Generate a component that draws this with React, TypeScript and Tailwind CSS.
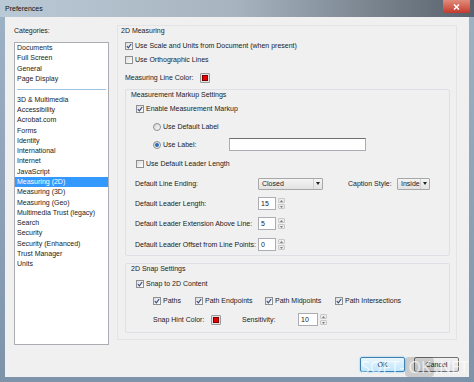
import React from "react";

const font = "font-['Liberation_Sans',Arial,sans-serif]";

const Check = ({ on = true }: { on?: boolean }) => (
  <span className="inline-flex h-[8px] w-[8px] shrink-0 items-center justify-center border border-[#8e8f8f] bg-gradient-to-br from-[#dcdcdc] to-[#ffffff]">
    {on && (
      <svg width="6" height="6" viewBox="0 0 6 6">
        <path d="M0.8 3.2 L2.4 4.8 L5.2 1" fill="none" stroke="#3a4c85" strokeWidth="1.2" />
      </svg>
    )}
  </span>
);

const Radio = ({ on = false }: { on?: boolean }) => (
  <span className="inline-flex h-[8px] w-[8px] shrink-0 items-center justify-center rounded-full border border-[#8e8f8f] bg-gradient-to-br from-[#d6d6d6] to-[#fafafa]">
    {on && <span className="h-[4px] w-[4px] rounded-full bg-[#2b6bc0]" />}
  </span>
);

const CheckRow = ({ label, on = true, className = "" }: { label: string; on?: boolean; className?: string }) => (
  <div className={`flex h-[10px] items-center gap-[2px] ${className}`}>
    <Check on={on} />
    <span>{label}</span>
  </div>
);

const Swatch = () => (
  <span className="inline-flex h-[10px] w-[10px] items-center justify-center rounded-[1px] border border-[#9a9a9a] bg-[#e4e4e4]">
    <span className="h-[6px] w-[6px] border border-[#7a0000] bg-[#e80000]" />
  </span>
);

const Spin = ({ value, w = 18 }: { value: string; w?: number }) => (
  <div className="flex h-[13px] items-stretch gap-[2px]">
    <div className="flex items-center border border-[#abadb3] bg-white pl-[2px]" style={{ width: w }}>
      {value}
    </div>
    <div className="flex w-[7px] flex-col justify-center gap-[1px]">
      <div className="flex h-[5px] items-center justify-center rounded-[1px] border border-[#c8c8c8] bg-[#ececec]">
        <svg width="3" height="2" viewBox="0 0 3 2"><path d="M0 2 L1.5 0 L3 2Z" fill="#7a7a7a" /></svg>
      </div>
      <div className="flex h-[5px] items-center justify-center rounded-[1px] border border-[#c8c8c8] bg-[#ececec]">
        <svg width="3" height="2" viewBox="0 0 3 2"><path d="M0 0 L1.5 2 L3 0Z" fill="#7a7a7a" /></svg>
      </div>
    </div>
  </div>
);

const Dropdown = ({ value, w }: { value: string; w: number }) => (
  <div className="flex h-[12px] items-stretch rounded-[1px] border border-[#a8a8a8] bg-gradient-to-b from-[#f4f4f4] to-[#e2e2e2]" style={{ width: w }}>
    <div className="flex flex-1 items-center pl-[3px]">{value}</div>
    <div className="flex w-[9px] items-center justify-center border-l border-[#d0d0d0]">
      <svg width="4" height="3" viewBox="0 0 4 3"><path d="M0 0 L4 0 L2 3Z" fill="#222" /></svg>
    </div>
  </div>
);

const categories: (string | null)[] = [
  "Documents",
  "Full Screen",
  "General",
  "Page Display",
  null,
  "3D & Multimedia",
  "Accessibility",
  "Acrobat.com",
  "Forms",
  "Identity",
  "International",
  "Internet",
  "JavaScript",
  "Measuring (2D)",
  "Measuring (3D)",
  "Measuring (Geo)",
  "Multimedia Trust (legacy)",
  "Search",
  "Security",
  "Security (Enhanced)",
  "Trust Manager",
  "Units",
];

const LabelRow = ({ label, children }: { label: string; children: React.ReactNode }) => (
  <div className="flex h-[13px] items-center pl-[9px]">
    <span className="w-[123px] shrink-0">{label}</span>
    {children}
  </div>
);

export default function App() {
  return (
    <div className={`relative h-[382px] w-[474px] overflow-hidden bg-gradient-to-b from-[#9fb3c6] to-[#7d93aa] text-[7px] leading-[10px] text-[#1b1b1b] ${font}`}>
      {/* title bar */}
      <div className="flex h-[17px] items-center bg-gradient-to-r from-[#bac9d6] via-[#a7b4c0] to-[#59626c] pl-[5px]">
        <span className="flex-1 text-[#111]">Preferences</span>
        <div className="mr-[4px] flex h-[13px] w-[27px] -translate-y-[2px] items-center justify-center rounded-b-[3px] bg-gradient-to-b from-[#e08a7c] to-[#c4382a]">
          <svg width="7" height="6" viewBox="0 0 7 6">
            <path d="M1 0.5 L6 5.5 M6 0.5 L1 5.5" stroke="#fff" strokeWidth="1.5" />
          </svg>
        </div>
      </div>

      {/* dialog body */}
      <div className="mx-[5px] flex h-[360px] flex-col bg-[#f0f0f0]">
        <div className="flex">
          {/* categories */}
          <div className="ml-[9px] w-[95px]">
            <div className="mt-[9px] h-[10px]">Categories:</div>
            <div className="mt-[6px] h-[303px] border border-[#abadb3] bg-white">
              {categories.map((c, i) =>
                c === null ? (
                  <div key={i} className="flex h-[10.3px] items-center px-[2px]">
                    <div className="h-px w-full bg-[#9cc3e0]" />
                  </div>
                ) : (
                  <div
                    key={i}
                    className={`flex h-[10.3px] items-center pl-[2px] ${c === "Measuring (2D)" ? "bg-[#3399ff] text-white" : ""}`}
                  >
                    {c}
                  </div>
                )
              )}
            </div>
          </div>

          {/* settings panel */}
          <div className="ml-[8px] mt-[8px] h-[315px] w-[340px] border border-[#e2e4e6]">
            <div className="h-[10px] pl-[3px]">2D Measuring</div>
            <CheckRow className="ml-[7px] mt-[5px]" label="Use Scale and Units from Document (when present)" />
            <CheckRow className="ml-[7px] mt-[4px]" label="Use Orthographic Lines" on={false} />
            <div className="ml-[7px] mt-[8px] flex h-[10px] items-center">
              <span className="w-[75px]">Measuring Line Color:</span>
              <Swatch />
            </div>

            {/* markup group */}
            <div className="ml-[7px] mt-[6px] h-[167px] w-[325px] rounded-[2px] border border-[#dde1e6]">
              <div className="h-[10px] pl-[5px]">Measurement Markup Settings</div>
              <CheckRow className="ml-[10px] mt-[4px]" label="Enable Measurement Markup" />
              <div className="ml-[27px] mt-[8px] flex h-[10px] items-center gap-[2px]">
                <Radio />
                <span>Use Default Label</span>
              </div>
              <div className="ml-[27px] mt-[6px] flex h-[13px] items-center">
                <Radio on />
                <span className="ml-[2px] w-[66px]">Use Label:</span>
                <div className="h-[13px] w-[137px] border border-[#abadb3] border-t-[#6f6f6f] bg-white" />
              </div>
              <CheckRow className="ml-[10px] mt-[8px]" label="Use Default Leader Length" on={false} />
              <div className="mt-[8px]">
                <LabelRow label="Default Line Ending:">
                  <Dropdown value="Closed" w={65} />
                  <span className="ml-[25px] w-[49px]">Caption Style:</span>
                  <Dropdown value="Inside" w={33} />
                </LabelRow>
              </div>
              <div className="mt-[7px]">
                <LabelRow label="Default Leader Length:">
                  <Spin value="15" />
                </LabelRow>
              </div>
              <div className="mt-[7px]">
                <LabelRow label="Default Leader Extension Above Line:">
                  <Spin value="5" />
                </LabelRow>
              </div>
              <div className="mt-[8px]">
                <LabelRow label="Default Leader Offset from Line Points:">
                  <Spin value="0" />
                </LabelRow>
              </div>
            </div>

            {/* snap group */}
            <div className="ml-[7px] mt-[7px] h-[70px] w-[325px] rounded-[2px] border border-[#dde1e6]">
              <div className="h-[10px] pl-[5px]">2D Snap Settings</div>
              <CheckRow className="ml-[10px] mt-[5px]" label="Snap to 2D Content" />
              <div className="ml-[27px] mt-[7px] flex">
                <CheckRow className="w-[42px]" label="Paths" />
                <CheckRow className="w-[70px]" label="Path Endpoints" />
                <CheckRow className="w-[70px]" label="Path Midpoints" />
                <CheckRow label="Path Intersections" />
              </div>
              <div className="ml-[27px] mt-[7px] flex h-[13px] items-center">
                <span className="w-[58px]">Snap Hint Color:</span>
                <Swatch />
                <span className="ml-[21px] w-[56px]">Sensitivity:</span>
                <Spin value="10" w={20} />
              </div>
            </div>
          </div>
        </div>

        {/* buttons */}
        <div className="mr-[10px] mt-[12px] flex justify-end gap-[9px]">
          <button className="flex h-[15px] w-[45px] items-center justify-center rounded-[2px] border border-[#3c7fb1] bg-gradient-to-b from-[#eaf6fd] to-[#bee6fd] shadow-[0_0_2px_#6fc3f0]">
            OK
          </button>
          <button className="flex h-[15px] w-[45px] items-center justify-center rounded-[2px] border border-[#707070] bg-gradient-to-b from-[#f2f2f2] to-[#dcdcdc]">
            Cancel
          </button>
        </div>
      </div>

      {/* watermark, lies over the buttons as in the picture */}
      <div className="pointer-events-none absolute left-[361px] top-[357px] flex items-center font-['Open_Sans',sans-serif] text-[16px] leading-[20px] text-white/70">
        <span>SOFT-</span>
        <span className="mx-[1px] rounded-[4px] bg-black/15 px-[3px]">OK</span>
        <span>.NET</span>
      </div>
    </div>
  );
}
